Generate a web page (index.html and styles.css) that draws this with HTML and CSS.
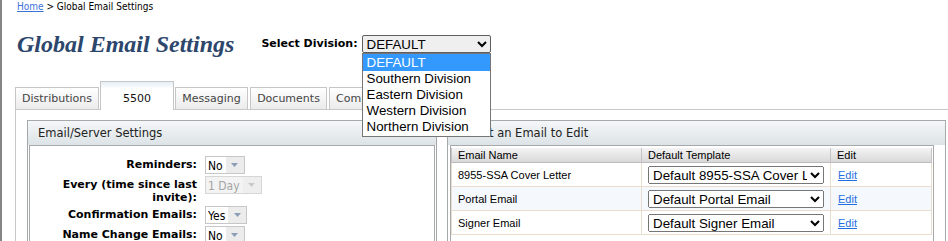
FILE: index.html
```html
<!DOCTYPE html>
<html lang="en">
<head>
<meta charset="utf-8">
<title>Global Email Settings</title>
<link rel="stylesheet" href="styles.css">
</head>
<body>
<div class="page">
  <div class="crumb"><a href="#">Home</a> &gt; Global Email Settings</div>

  <div class="head">
    <h1 class="title">Global Email Settings</h1>
    <div class="division">
      <span class="div-label">Select Division:</span>
      <div class="select-wrap">
        <select class="div-select">
          <option selected>DEFAULT</option>
          <option>Southern Division</option>
          <option>Eastern Division</option>
          <option>Western Division</option>
          <option>Northern Division</option>
        </select>
        <ul class="popup">
          <li class="sel">DEFAULT</li>
          <li>Southern Division</li>
          <li>Eastern Division</li>
          <li>Western Division</li>
          <li>Northern Division</li>
        </ul>
      </div>
    </div>
  </div>

  <div class="tabs">
    <div class="tab t-dist">Distributions</div>
    <div class="tab t-5500 active">5500</div>
    <div class="tab t-msg">Messaging</div>
    <div class="tab t-doc">Documents</div>
    <div class="tab t-comp">Compliance</div>
  </div>

  <div class="tab-content">
    <div class="panels">
      <section class="panel panel-left">
        <div class="panel-head">Email/Server Settings</div>
        <div class="panel-body">
          <div class="box form">
            <label class="lbl">Reminders:</label>
            <span class="kdd"><span class="kdd-val">No</span><span class="kdd-arrow"><svg width="7" height="4" viewBox="0 0 7 4"><path d="M0 0H7L3.5 4Z"/></svg></span></span>

            <label class="lbl">Every (time since last invite):</label>
            <span class="kdd disabled"><span class="kdd-val">1 Day</span><span class="kdd-arrow"><svg width="7" height="4" viewBox="0 0 7 4"><path d="M0 0H7L3.5 4Z"/></svg></span></span>

            <label class="lbl">Confirmation Emails:</label>
            <span class="kdd"><span class="kdd-val">Yes</span><span class="kdd-arrow"><svg width="7" height="4" viewBox="0 0 7 4"><path d="M0 0H7L3.5 4Z"/></svg></span></span>

            <label class="lbl">Name Change Emails:</label>
            <span class="kdd"><span class="kdd-val">No</span><span class="kdd-arrow"><svg width="7" height="4" viewBox="0 0 7 4"><path d="M0 0H7L3.5 4Z"/></svg></span></span>
          </div>
        </div>
      </section>

      <section class="panel panel-right">
        <div class="panel-head">Select an Email to Edit</div>
        <div class="panel-body">
          <div class="box box-right">
            <table class="etable">
              <colgroup><col class="c1"><col class="c2"><col class="c3"></colgroup>
              <thead>
                <tr><th>Email Name</th><th>Default Template</th><th>Edit</th></tr>
              </thead>
              <tbody>
                <tr>
                  <td>8955-SSA Cover Letter</td>
                  <td><select class="tsel"><option>Default 8955-SSA Cover Letter</option></select></td>
                  <td><a href="#">Edit</a></td>
                </tr>
                <tr class="alt">
                  <td>Portal Email</td>
                  <td><select class="tsel"><option>Default Portal Email</option></select></td>
                  <td><a href="#">Edit</a></td>
                </tr>
                <tr>
                  <td>Signer Email</td>
                  <td><select class="tsel"><option>Default Signer Email</option></select></td>
                  <td><a href="#">Edit</a></td>
                </tr>
              </tbody>
            </table>
          </div>
        </div>
      </section>
    </div>
  </div>
</div>
</body>
</html>
```

FILE: styles.css
```css
* { box-sizing: border-box; }

html, body {
  margin: 0;
  padding: 0;
  background: #fff;
}

body {
  font-family: "DejaVu Sans", sans-serif;
  color: #000;
}

.page {
  width: 948px;
  height: 241px;
  overflow: hidden;
  border-left: 2px solid #858585;
}

/* breadcrumb */
.crumb {
  padding: 1px 0 0 15px;
  height: 13px;
  font-family: "DejaVu Sans Condensed", "DejaVu Sans", sans-serif;
  font-size: 10px;
  line-height: 12px;
}
.crumb a {
  color: #3b72d8;
  text-decoration: underline;
}

/* header */
.head {
  display: flex;
  align-items: center;
  height: 30px;
  margin-top: 16px;
  padding-left: 15px;
}
.title {
  margin: 0;
  font-family: "Liberation Serif", "Times New Roman", serif;
  font-weight: bold;
  font-style: italic;
  font-size: 24px;
  line-height: 30px;
  color: #2c466c;
}
.division {
  display: flex;
  align-items: center;
  gap: 4px;
  margin-left: 27px;
  margin-top: -1px;
}
.div-label {
  font-weight: bold;
  font-size: 11px;
}
.select-wrap {
  position: relative;
}
.div-select {
  display: block;
  width: 129px;
  height: 18px;
  margin: 0;
  font-family: "Liberation Sans", Arial, sans-serif;
  font-size: 13.33px;
  color: #000;
  border: 1px solid #5f5f5f;
  border-radius: 2px;
}
.popup {
  position: absolute;
  left: 0;
  top: 18px;
  z-index: 10;
  width: 129px;
  margin: 0;
  padding: 0 0 1px;
  list-style: none;
  background: #fff;
  border: 1px solid #767676;
  font-family: "Liberation Sans", Arial, sans-serif;
  font-size: 13.33px;
  line-height: 16px;
}
.popup li {
  height: 16px;
  padding-left: 4px;
  white-space: nowrap;
}
.popup li.sel {
  height: 17px;
  line-height: 17px;
  background: #3399ff;
  color: #fff;
}

/* tabs */
.tabs {
  display: flex;
  align-items: flex-end;
  height: 28px;
  margin-top: 22px;
  padding-left: 13px;
  position: relative;
  z-index: 1;
}
.tab {
  height: 22px;
  line-height: 22px;
  border: 1px solid #c6c6c6;
  border-bottom: none;
  background: linear-gradient(#ffffff, #ebebeb);
  font-size: 11px;
  color: #444;
  text-align: center;
  white-space: nowrap;
  overflow: hidden;
}
.t-dist { width: 84px; margin-right: 1px; }
.t-5500 { width: 74px; margin-right: 1px; }
.t-msg { width: 73px; margin-right: 2px; }
.t-doc { width: 77px; margin-right: 2px; }
.t-comp { width: 80px; text-align: left; padding-left: 6px; }
.tab.active {
  height: 29px;
  margin-bottom: -1px;
  padding-top: 6px;
  background: linear-gradient(#e6eef4, #ffffff 7px);
  color: #111;
}

.tab-content {
  height: 140px;
  margin-left: 13px;
  padding: 10px 0 0 11px;
  border-left: 1px solid #c9c9c9;
  border-top: 1px solid #c9c9c9;
}

.panels {
  display: flex;
  gap: 10px;
}
.panel {
  flex: none;
  height: 130px;
  border: 1px solid #a4a9ac;
  background: #fff;
}
.panel-left { width: 410px; }
.panel-right { width: 499px; }

.panel-head {
  height: 24px;
  line-height: 24px;
  padding-left: 10px;
  font-size: 11.5px;
  color: #222;
  background: linear-gradient(#f5f7f8, #dce3e6);
}
.panel-body {
  padding: 0 1px;
}
.box {
  height: 110px;
  border: 1px solid #a9a9a9;
  background: #fff;
}

/* left form */
.form {
  display: grid;
  grid-template-columns: 167px auto;
  column-gap: 8px;
  row-gap: 2px;
  align-items: start;
  justify-items: start;
  align-content: start;
  padding-top: 10px;
}
.lbl {
  justify-self: end;
  text-align: right;
  font-weight: bold;
  font-size: 11px;
  line-height: 13px;
  padding-top: 2px;
}
.kdd {
  display: inline-flex;
  height: 18px;
  border: 1px solid #c7c7c7;
  background: #fff;
  font-family: "DejaVu Sans Condensed", "DejaVu Sans", sans-serif;
  font-size: 12px;
  line-height: 16px;
}
.kdd-val {
  padding: 1px 3px 0 2px;
  color: #000;
}
.kdd-arrow {
  display: flex;
  align-items: center;
  justify-content: center;
  width: 18px;
  background: #ececec;
}
.kdd-arrow svg { fill: #8c9db8; }
.kdd.disabled {
  border-color: #d6d6d6;
  background: #f3f3f3;
}
.kdd.disabled .kdd-val { color: #a5a5a5; }
.kdd.disabled .kdd-arrow { background: #eeeeee; }
.kdd.disabled .kdd-arrow svg { fill: #c9c9c9; }

/* right table */
.box-right {
  width: 484px;
  margin-left: 1px;
  padding-top: 2px;
}
.etable {
  width: 481px;
  table-layout: fixed;
  border-collapse: separate;
  border-spacing: 0;
  font-family: "Liberation Sans", Arial, sans-serif;
  font-size: 11px;
}
.c1 { width: 191px; }
.c2 { width: 189px; }
.c3 { width: 101px; }
.etable th {
  height: 15px;
  padding: 0 6px;
  text-align: left;
  font-weight: normal;
  line-height: 14px;
  color: #000;
  background: linear-gradient(#f4f4f4, #d9d9d9);
  border-bottom: 1px solid #bcbcbc;
  border-right: 1px solid #c4c4c4;
}
.etable th:first-child { border-left: 1px solid #c4c4c4; }
.etable td {
  height: 24px;
  padding: 0 6px;
  border-bottom: 1px solid #e8dccc;
  border-right: 1px solid #e8dccc;
  white-space: nowrap;
  overflow: hidden;
}
.etable td:first-child { border-left: 1px solid #e8dccc; }
.etable td:last-child { padding-left: 7px; }
.etable tr.alt td { background: #f5f8fd; }
.etable a {
  color: #1f6fe0;
  text-decoration: underline;
}
.tsel {
  display: block;
  width: 176px;
  height: 18px;
  margin: 0;
  font-family: "Liberation Sans", Arial, sans-serif;
  font-size: 13.33px;
  color: #000;
}
```
